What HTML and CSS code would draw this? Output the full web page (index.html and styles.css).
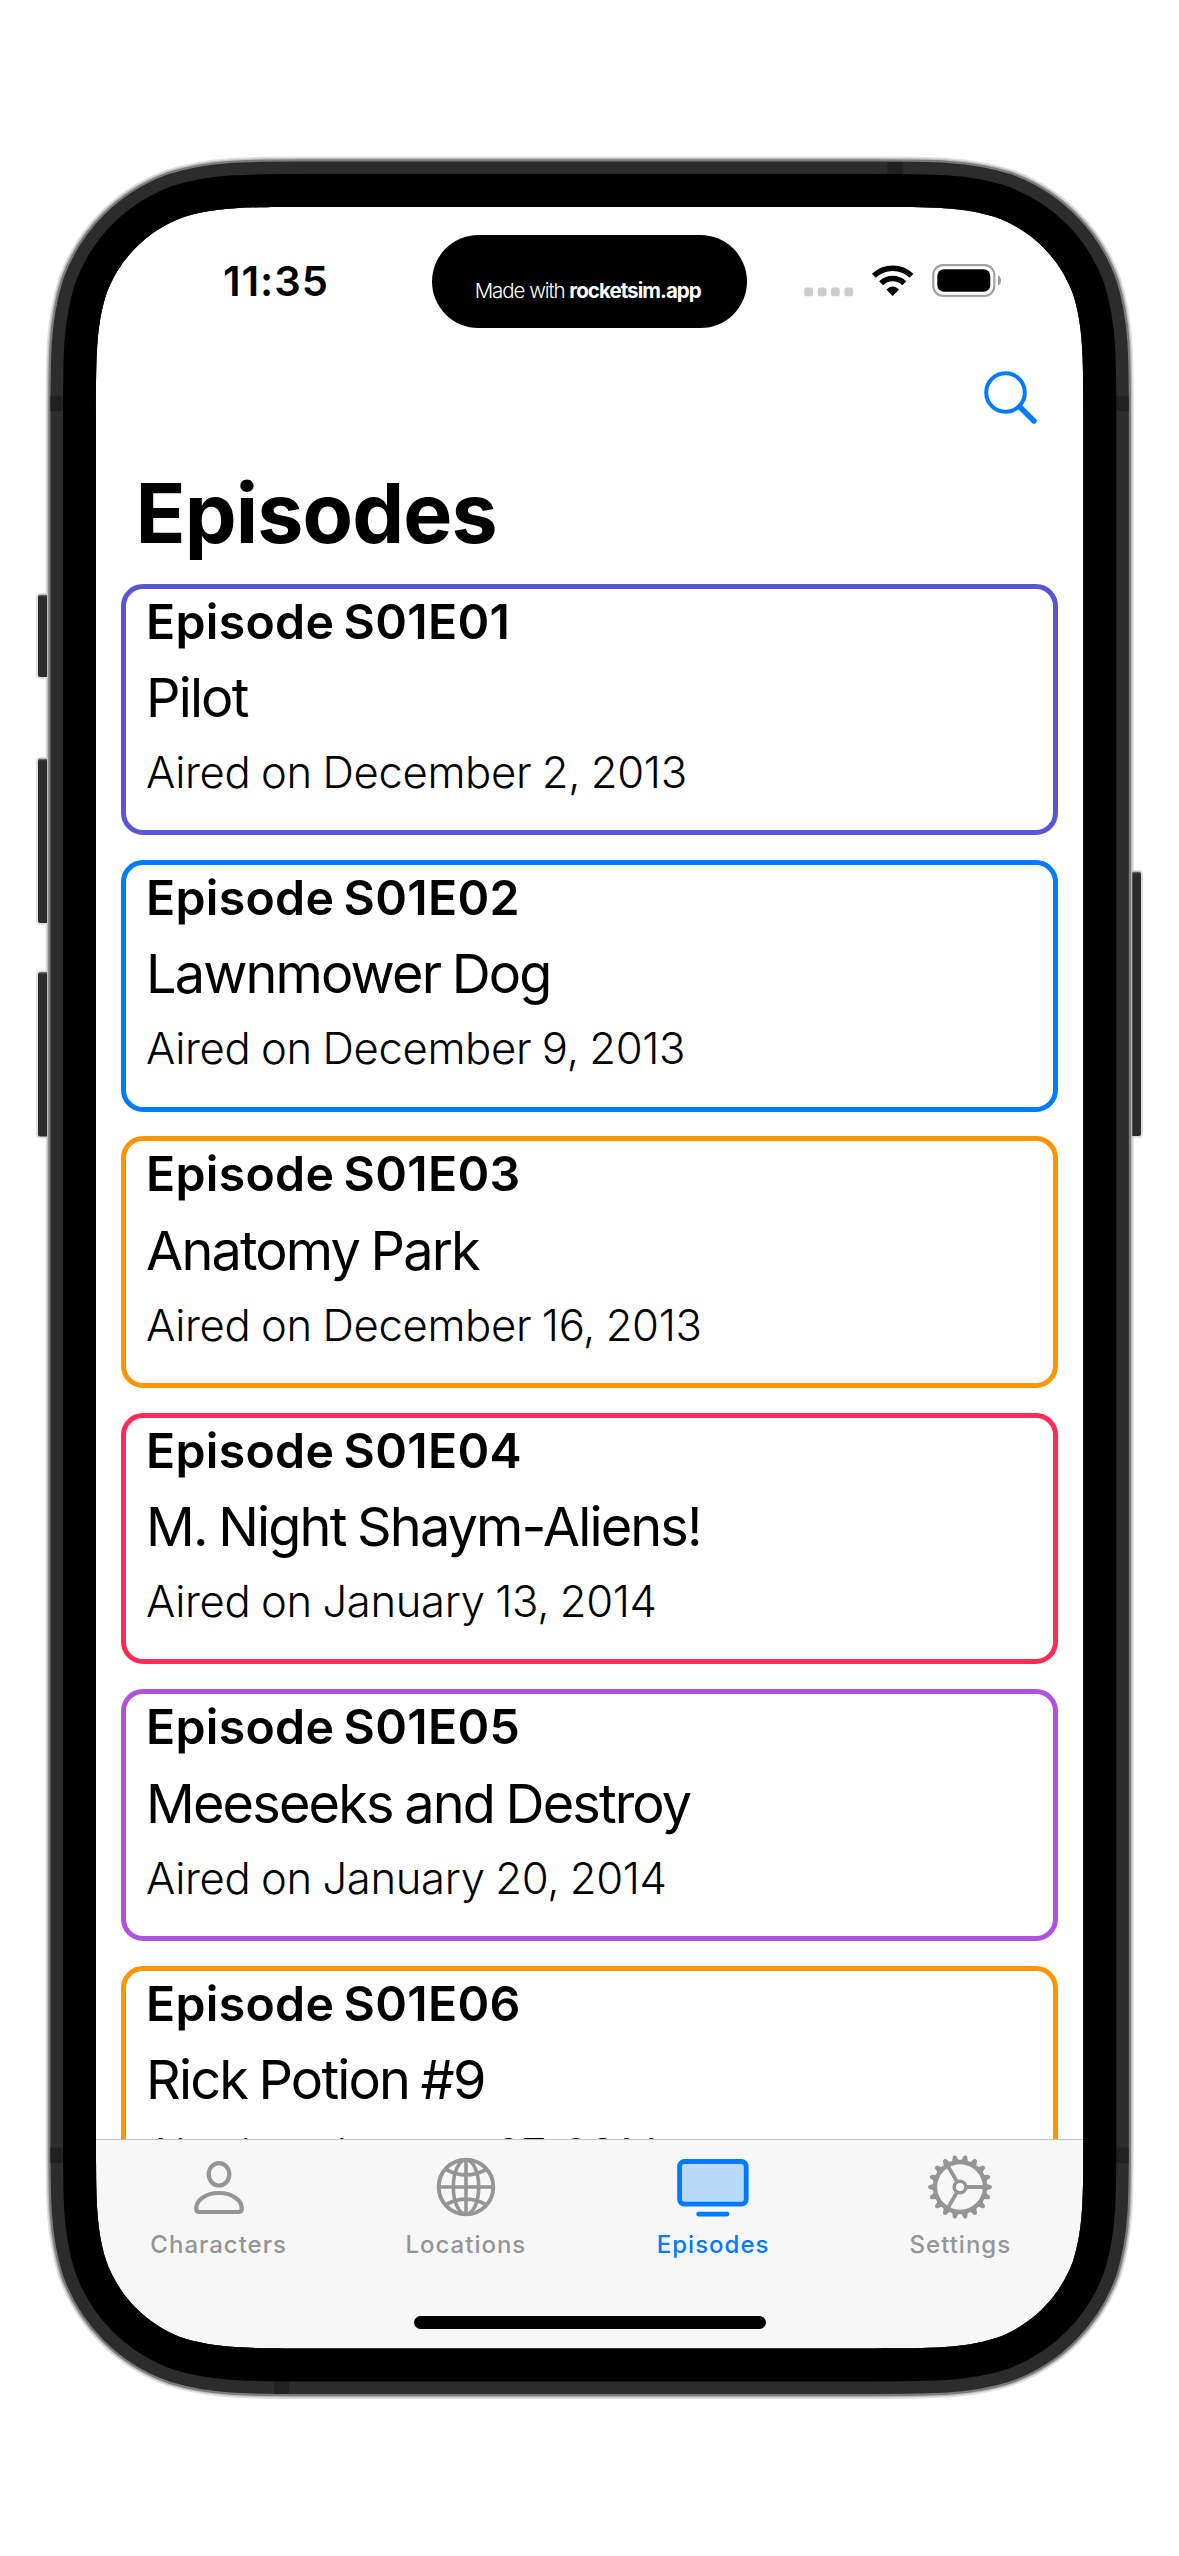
FILE: index.html
```html
<!DOCTYPE html>
<html lang="en">
<head>
<meta charset="utf-8">
<title>Episodes</title>
<link rel="stylesheet" href="styles.css">
</head>
<body>
<div class="stage">
  <main class="screen">
    <header class="status">
      <time class="clock">11:35</time>
      <div class="island"><span>Made with <b>rocketsim.app</b></span></div>
      <svg class="status-icons" viewBox="800 260 206 40" width="206" height="40">
        <g fill="#cccccc">
          <rect x="804.3" y="287.5" width="8.8" height="8.8" rx="2.6"/>
          <rect x="817.7" y="287.5" width="8.8" height="8.8" rx="2.6"/>
          <rect x="831" y="287.5" width="8.8" height="8.8" rx="2.6"/>
          <rect x="844.4" y="287.5" width="8.8" height="8.8" rx="2.6"/>
        </g>
        <g fill="none" stroke="#000" stroke-width="5.6">
          <path d="M873.9 275.8A27 27 0 0 1 911.5 275.8"/>
          <path d="M881.1 283.3A16.6 16.6 0 0 1 904.3 283.3"/>
        </g>
        <path d="M892.7 296L886.3 289.4Q892.7 283.8 899.1 289.4Z" fill="#000"/>
        <rect x="933.3" y="265.2" width="61" height="30.6" rx="9.8" fill="none" stroke="#a2a2a2" stroke-width="2.2"/>
        <rect x="937.3" y="269.2" width="53" height="22.6" rx="6.6" fill="#000"/>
        <path d="M998 275.3Q1001 277 1001 280.5T998 285.7Z" fill="#999"/>
      </svg>
    </header>
    <nav class="navbar">
      <svg viewBox="980 368 60 60" width="60" height="60" fill="none" stroke="#007aff" stroke-linecap="round">
        <circle cx="1005.5" cy="392.5" r="19.3" stroke-width="4"/>
        <path d="M1020 407L1034 421" stroke-width="5.4"/>
      </svg>
    </nav>
    <h1 class="title">Episodes</h1>
    <section class="list">
      <article class="card indigo"><h2>Episode S01E01</h2><p class="name">Pilot</p><p class="aired">Aired on December 2, 2013</p></article>
      <article class="card blue"><h2>Episode S01E02</h2><p class="name">Lawnmower Dog</p><p class="aired">Aired on December 9, 2013</p></article>
      <article class="card orange"><h2>Episode S01E03</h2><p class="name">Anatomy Park</p><p class="aired">Aired on December 16, 2013</p></article>
      <article class="card pink"><h2>Episode S01E04</h2><p class="name">M. Night Shaym-Aliens!</p><p class="aired">Aired on January 13, 2014</p></article>
      <article class="card purple"><h2>Episode S01E05</h2><p class="name">Meeseeks and Destroy</p><p class="aired">Aired on January 20, 2014</p></article>
      <article class="card orange"><h2>Episode S01E06</h2><p class="name">Rick Potion #9</p><p class="aired">Aired on January 27, 2014</p></article>
    </section>
    <footer class="bottom">
      <nav class="tabs">
        <a class="tab">
          <svg viewBox="-40 -34 80 68" width="80" height="68" fill="none" stroke="#959595" stroke-width="4.2">
            <ellipse cx="0" cy="-12.7" rx="10.3" ry="11.2"/>
            <path d="M-19.4 25H19.4Q22.8 25 22.8 21.6C22.6 13.5 14 6 0 6S-22.6 13.5-22.8 21.6Q-22.8 25-19.4 25Z"/>
          </svg>
          <span>Characters</span>
        </a>
        <a class="tab">
          <svg viewBox="-40 -34 80 68" width="80" height="68" fill="none" stroke="#959595" stroke-width="3.6">
            <circle r="27.3" stroke-width="3.9"/>
            <ellipse rx="12.7" ry="27.3"/>
            <path d="M0-27V27M-27 0H27M-20.3-17.6Q0-6.6 20.3-17.6M-20.3 17.6Q0 6.6 20.3 17.6"/>
          </svg>
          <span>Locations</span>
        </a>
        <a class="tab active">
          <svg viewBox="-40 -34 80 68" width="80" height="68" fill="none" stroke="#007aff">
            <rect x="-33.4" y="-25.5" width="66.6" height="42.7" rx="4.8" fill="#b9d9f8" stroke-width="4.8"/>
            <path d="M-14.4 27.1H14" stroke-width="4.8" stroke-linecap="round"/>
          </svg>
          <span>Episodes</span>
        </a>
        <a class="tab">
          <svg viewBox="-40 -34 80 68" width="80" height="68" fill="none" stroke="#959595">
            <circle r="25" stroke-width="4.4"/>
            <circle r="5.8" stroke-width="3.6"/>
            <path d="M7 0H24M-3.5-6.1L-12-20.8M-3.5 6.1L-12 20.8" stroke-width="3.8"/>
            <defs><path id="tooth" d="M25.5-3.6L31.2-1.8Q32.8 0 31.2 1.8L25.5 3.6Z" fill="#959595" stroke="none"/>
            <g id="teeth"><use href="#tooth"/><use href="#tooth" transform="rotate(20)"/><use href="#tooth" transform="rotate(40)"/><use href="#tooth" transform="rotate(60)"/><use href="#tooth" transform="rotate(80)"/><use href="#tooth" transform="rotate(100)"/></g></defs>
            <use href="#teeth"/><use href="#teeth" transform="rotate(120)"/><use href="#teeth" transform="rotate(240)"/>
          </svg>
          <span>Settings</span>
        </a>
      </nav>
      <div class="home"></div>
    </footer>
  </main>
  <svg class="frame" viewBox="0 0 1179 2556" width="1179" height="2556">
    <defs>
      <path id="edge" d="M307 207H872.3c60.8 0 91.2 0 123.9 10.3c35.7 13 63.8 41.1 76.8 76.8c10.3 32.7 10.3 63.1 10.3 123.9V2137.4c0 60.8 0 91.2-10.3 123.9c-13 35.7-41.1 63.8-76.8 76.8c-32.7 10.3-63.1 10.3-123.9 10.3H307c-60.8 0-91.2 0-123.9-10.3c-35.7-13-63.8-41.1-76.8-76.8c-10.3-32.7-10.3-63.1-10.3-123.9V418c0-60.8 0-91.2 10.3-123.9c13-35.7 41.1-63.8 76.8-76.8c32.7-10.3 63.1-10.3 123.9-10.3z"/>
      <clipPath id="outside"><path clip-rule="evenodd" d="M0 0H1179V2556H0ZM307 207H872.3c60.8 0 91.2 0 123.9 10.3c35.7 13 63.8 41.1 76.8 76.8c10.3 32.7 10.3 63.1 10.3 123.9V2137.4c0 60.8 0 91.2-10.3 123.9c-13 35.7-41.1 63.8-76.8 76.8c-32.7 10.3-63.1 10.3-123.9 10.3H307c-60.8 0-91.2 0-123.9-10.3c-35.7-13-63.8-41.1-76.8-76.8c-10.3-32.7-10.3-63.1-10.3-123.9V418c0-60.8 0-91.2 10.3-123.9c13-35.7 41.1-63.8 76.8-76.8c32.7-10.3 63.1-10.3 123.9-10.3z"/></clipPath>
    </defs>
    <g clip-path="url(#outside)" fill="none">
      <path d="M0 0H1179V2556H0Z" fill="#fff"/>
      <use href="#edge" stroke="#e0e0e0" stroke-width="101"/>
      <g fill="#2c2c2c" stroke="#dedede" stroke-width="2">
        <rect x="37" y="594" width="20" height="84" rx="3"/>
        <rect x="37" y="758" width="20" height="166" rx="3"/>
        <rect x="37" y="971.5" width="20" height="166" rx="3"/>
        <rect x="1122" y="871" width="20" height="266" rx="3"/>
      </g>
      <path d="M39 595.5H48M39 759.5H48M39 973H48M1131 872.5H1140" stroke="#5c5c5c" stroke-width="1.5"/>
      <use href="#edge" stroke="#bdbdbd" stroke-width="98"/>
      <use href="#edge" stroke="#7c7c7c" stroke-width="95.5"/>
      <use href="#edge" stroke="#2c2c2c" stroke-width="91"/>
      <path d="M887.3 162H903V175H887.3ZM274 2381H289V2394H274ZM50.4 395.7H63V411H50.4ZM50.4 2147.5H63V2163H50.4ZM1116 395.7H1128.6V411H1116ZM1116 2147.5H1128.6V2163H1116Z" fill="#212121"/>
      <use href="#edge" stroke="#000" stroke-width="66"/>
    </g>
  </svg>
</div>
</body>
</html>
```
FILE: styles.css
```css
* { box-sizing: border-box; }
body { margin: 0; background: #fff; color: #000; font-family: Inter, "Liberation Sans", sans-serif; }
h1, h2, p { margin: 0; }
svg { display: block; flex: none; }

.stage { position: relative; width: 1179px; height: 2556px; padding: 207px 95px 207px 95px; overflow: hidden; }
.screen { width: 989px; height: 2142px; display: flex; flex-direction: column; overflow: hidden; background: #fff; }
.frame { position: absolute; inset: 0; pointer-events: none; }

.status { flex: none; height: 128px; padding-top: 28px; display: grid; grid-template-columns: 337px 315px 1fr; align-items: start; }
.clock { padding: 20px 0 0 128px; font-size: 41.7px; line-height: 52px; font-weight: 600; letter-spacing: 0.9px; }
.island { height: 92.6px; border-radius: 47px; background: #000; color: #fff; display: flex; justify-content: center; padding: 41px 3.5px 0 0; font-size: 20.5px; line-height: 30px; font-weight: 300; letter-spacing: -1.05px; white-space: nowrap; }
.island b { font-weight: 700; letter-spacing: -0.95px; }
.status-icons { margin: 25px 0 0 53px; }

.navbar { flex: none; height: 117px; display: flex; justify-content: flex-end; padding: 33px 44px 0 0; }
.title { flex: none; height: 131.7px; padding: 11px 0 0 40.5px; font-size: 82.5px; line-height: 100px; font-weight: 700; letter-spacing: -0.92px; }

.list { flex: 1; min-height: 0; overflow: hidden; padding: 0 26px; display: flex; flex-direction: column; gap: 24.9px; }
.card { flex: none; height: 251.5px; padding-left: 20px; border: 5px solid; border-radius: 22px; }
.card h2 { font-size: 48.2px; line-height: 65.4px; font-weight: 600; letter-spacing: 0.28px; word-spacing: -3px; color: #000; }
.name { font-size: 54px; line-height: 88px; letter-spacing: -1.84px; word-spacing: -1.8px; color: #000; }
.aired { font-size: 43.6px; line-height: 62px; font-weight: 300; letter-spacing: -0.34px; word-spacing: -1.3px; color: #000; }
.indigo { border-color: #5856d6; }
.blue { border-color: #007aff; }
.orange { border-color: #ff9500; }
.pink { border-color: #ff2d55; }
.purple { border-color: #af52de; }

.bottom { flex: none; height: 210px; border-top: 1.5px solid #c2c2c2; background: #f7f7f7; display: flex; flex-direction: column; align-items: center; justify-content: space-between; padding-bottom: 20.5px; }
.tabs { width: 100%; padding-top: 13px; display: grid; grid-template-columns: repeat(4, 1fr); }
.tab { display: flex; flex-direction: column; align-items: center; color: #959595; font-size: 24px; line-height: 34px; font-weight: 500; letter-spacing: 1px; }
.tab span { margin-top: 7px; }
.active { color: #007aff; }
.home { width: 352px; height: 12.6px; border-radius: 7px; background: #000; }
```
